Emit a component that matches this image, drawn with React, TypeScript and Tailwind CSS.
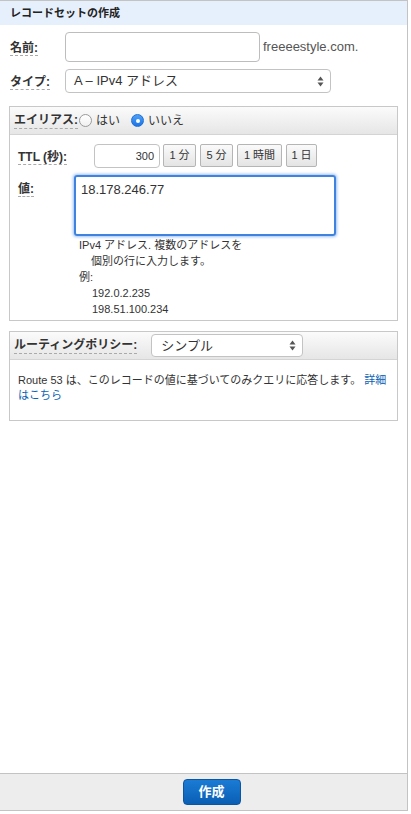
const font = { fontFamily: '"Liberation Sans", "Noto Sans CJK JP", sans-serif' };

function Label({ children, className = "" }: { children: React.ReactNode; className?: string }) {
  return (
    <span className={`font-bold text-[12px] text-[#333] border-b border-dashed border-[#aaa] leading-[16px] ${className}`}>
      {children}
    </span>
  );
}

function SelectArrows() {
  return (
    <svg width="7" height="11" viewBox="0 0 7 11" className="shrink-0">
      <path d="M3.5 0.5 L6.5 4.5 L0.5 4.5 Z" fill="#555" />
      <path d="M3.5 10.5 L6.5 6.5 L0.5 6.5 Z" fill="#555" />
    </svg>
  );
}

function Radio({ checked }: { checked?: boolean }) {
  if (checked) {
    return (
      <span className="block shrink-0 w-[13px] h-[13px] rounded-full bg-gradient-to-b from-[#4ea0f7] to-[#1a73e6] border border-[#1d6fd6] flex items-center justify-center">
        <span className="block w-[4px] h-[4px] rounded-full bg-white" />
      </span>
    );
  }
  return <span className="block shrink-0 w-[13px] h-[13px] rounded-full bg-gradient-to-b from-white to-[#f0f0f0] border border-[#9a9a9a]" />;
}

function TtlButton({ children, w }: { children: React.ReactNode; w: string }) {
  return (
    <button
      className={`${w} h-[23px] border border-[#b5b5b5] rounded-[2px] bg-gradient-to-b from-[#fafafa] to-[#e4e4e4] text-[11px] text-[#333] flex items-center justify-center`}
    >
      {children}
    </button>
  );
}

export default function App() {
  return (
    <div style={font} className="w-[411px] h-[814px] bg-white">
      <div className="w-[408px] h-[811px] border-t border-r border-b border-[#c3c3c3] flex flex-col">
        {/* header */}
        <div className="h-[24px] bg-[#e6f0fc] flex items-center px-[10px]">
          <span className="text-[11px] font-bold text-[#222]">レコードセットの作成</span>
        </div>

        <div className="flex-1 flex flex-col">
          {/* name */}
          <div className="flex items-center mt-[7px] h-[30px]">
            <div className="w-[65px] pl-[10px]">
              <Label>名前:</Label>
            </div>
            <input className="w-[195px] h-[30px] border border-[#bdbdbd] rounded-[4px] outline-none" />
            <span className="ml-[3px] text-[13px] text-[#555]">freeeestyle.com.</span>
          </div>

          {/* type */}
          <div className="flex items-center mt-[7px] h-[24px]">
            <div className="w-[65px] pl-[10px]">
              <Label>タイプ:</Label>
            </div>
            <div className="w-[266px] h-[24px] border border-[#c3c3c3] rounded-[4px] flex items-center justify-between pl-[8px] pr-[6px] bg-white">
              <span className="text-[13px] text-[#333]">A – IPv4 アドレス</span>
              <SelectArrows />
            </div>
          </div>

          {/* alias panel */}
          <div className="mx-[9px] mt-[13px] border border-[#c8c8c8]">
            <div className="h-[28px] bg-gradient-to-b from-[#fbfbfb] to-[#e6e6e6] border-b border-[#d4d4d4] flex items-center pl-[4px]">
              <Label>エイリアス:</Label>
              <span className="ml-[1px]"><Radio /></span>
              <span className="ml-[4px] text-[12px] text-[#333]">はい</span>
              <span className="ml-[11px]"><Radio checked /></span>
              <span className="ml-[4px] text-[12px] text-[#333]">いいえ</span>
            </div>
            <div className="pl-[8px] pt-[9px] pb-[3px]">
              <div className="flex items-center h-[24px]">
                <div className="w-[76px]">
                  <Label>TTL (秒):</Label>
                </div>
                <div className="w-[66px] h-[24px] border border-[#c3c3c3] rounded-[4px] flex items-center justify-end pr-[5px] text-[11px] text-[#333]">
                  300
                </div>
                <div className="flex gap-[4px] ml-[3px] self-start">
                  <TtlButton w="w-[33px]">1 分</TtlButton>
                  <TtlButton w="w-[33px]">5 分</TtlButton>
                  <TtlButton w="w-[45px]">1 時間</TtlButton>
                  <TtlButton w="w-[31px]">1 日</TtlButton>
                </div>
              </div>
              <div className="flex mt-[7px]">
                <div className="w-[56px] pt-[1px]">
                  <Label>値:</Label>
                </div>
                <div className="w-[262px] h-[61px] border-2 border-[#3f83e0] rounded-[3px] shadow-[0_0_3px_1px_rgba(90,150,235,0.6)] px-[5px] pt-[3px] text-[13px] text-[#333]">
                  18.178.246.77
                </div>
              </div>
              <div className="ml-[61px] mt-[1px] text-[11px] text-[#333]">
                <div className="h-[16px] leading-[16px]">IPv4 アドレス. 複数のアドレスを</div>
                <div className="h-[16px] leading-[16px] pl-[12px]">個別の行に入力します。</div>
                <div className="h-[16px] leading-[16px]">例:</div>
                <div className="h-[16px] leading-[16px] pl-[13px]">192.0.2.235</div>
                <div className="h-[16px] leading-[16px] pl-[13px]">198.51.100.234</div>
              </div>
            </div>
          </div>

          {/* routing panel */}
          <div className="mx-[9px] mt-[10px] border border-[#c8c8c8] h-[90px]">
            <div className="h-[28px] bg-gradient-to-b from-[#fbfbfb] to-[#e6e6e6] border-b border-[#d4d4d4] flex items-center pl-[4px]">
              <Label>ルーティングポリシー:</Label>
              <div className="ml-[14px] w-[152px] h-[23px] border border-[#c3c3c3] rounded-[4px] bg-white flex items-center justify-between pl-[9px] pr-[6px]">
                <span className="text-[13px] text-[#333]">シンプル</span>
                <SelectArrows />
              </div>
            </div>
            <div className="px-[8px] pt-[13px] text-[11px] text-[#333]">
              <div className="h-[15px] leading-[15px] whitespace-nowrap">
                Route 53 は、このレコードの値に基づいてのみクエリに応答します。{" "}
                <span className="text-[#0b62b4]">詳細</span>
              </div>
              <div className="h-[15px] leading-[15px] text-[#0b62b4]">はこちら</div>
            </div>
          </div>
        </div>

        {/* footer */}
        <div className="h-[37px] border-t border-[#c3c3c3] bg-[#ededed] flex items-center justify-center pl-[16px]">
          <button className="w-[58px] h-[26px] rounded-[4px] bg-gradient-to-b from-[#1a7bd5] to-[#0a5fb4] border border-[#0a56a3] text-white font-bold text-[13px]">
            作成
          </button>
        </div>
      </div>
    </div>
  );
}
